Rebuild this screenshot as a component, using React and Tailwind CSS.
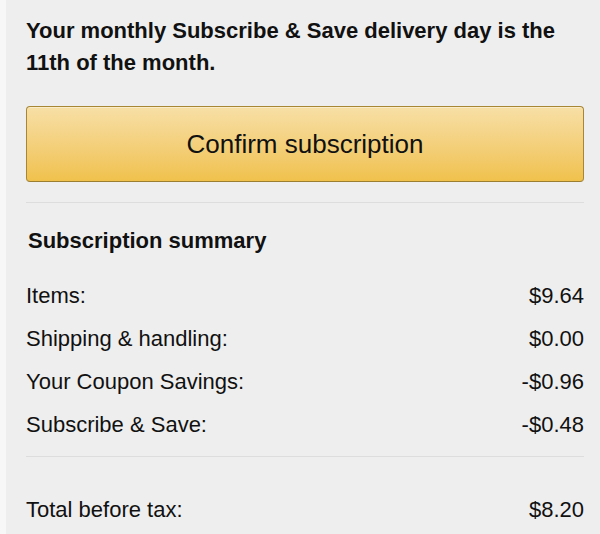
import React from 'react';

const rows = [
  { label: 'Items:', value: '$9.64' },
  { label: 'Shipping & handling:', value: '$0.00' },
  { label: 'Your Coupon Savings:', value: '-$0.96' },
  { label: 'Subscribe & Save:', value: '-$0.48' },
];

const App = () => {
  return (
    <div className="flex min-h-[534px] bg-[#eeeeee] font-['Liberation_Sans',Arial,sans-serif] text-[#111111]">
      <div className="w-[6px] shrink-0 bg-[#f7f7f7]" />
      <div className="flex-1 pl-[20px] pr-[16px] pt-[15px]">
        <h1 className="text-[22px] font-bold leading-[32px]">
          Your monthly Subscribe &amp; Save delivery day is the 11th of the month.
        </h1>

        <button className="mt-[27px] flex h-[76px] w-full items-center justify-center rounded-[4px] border border-[#a88734] border-b-[#9c7e31] bg-gradient-to-b from-[#f7dfa5] to-[#f0c14b] text-[26px] text-[#111111] shadow-[inset_0_1px_0_rgba(255,255,255,0.4)]">
          Confirm subscription
        </button>

        <div className="mt-[20px] h-px bg-[#dddddd]" />

        <h2 className="mt-[22px] pl-[2px] text-[22px] font-bold leading-[32px]">Subscription summary</h2>

        {/* Summary rows */}
        <div className="mt-[17px]">
          {rows.map((row) => (
            <div key={row.label} className="flex h-[43px] items-center justify-between text-[22px]">
              <span>{row.label}</span>
              <span>{row.value}</span>
            </div>
          ))}
        </div>

        <div className="mt-[10px] h-px bg-[#dddddd]" />

        <div className="mt-[31px] flex h-[43px] items-center justify-between text-[22px]">
          <span>Total before tax:</span>
          <span>$8.20</span>
        </div>
      </div>
    </div>
  );
};

export default App;
